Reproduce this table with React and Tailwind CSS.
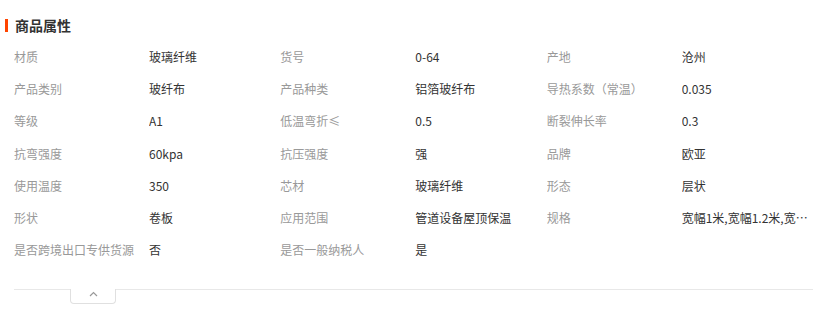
const attrs = [
  ["材质", "玻璃纤维"],
  ["货号", "0-64"],
  ["产地", "沧州"],
  ["产品类别", "玻纤布"],
  ["产品种类", "铝箔玻纤布"],
  ["导热系数（常温）", "0.035"],
  ["等级", "A1"],
  ["低温弯折≤", "0.5"],
  ["断裂伸长率", "0.3"],
  ["抗弯强度", "60kpa"],
  ["抗压强度", "强"],
  ["品牌", "欧亚"],
  ["使用温度", "350"],
  ["芯材", "玻璃纤维"],
  ["形态", "层状"],
  ["形状", "卷板"],
  ["应用范围", "管道设备屋顶保温"],
  ["规格", "宽幅1米,宽幅1.2米,宽幅1.5米"],
  ["是否跨境出口专供货源", "否"],
  ["是否一般纳税人", "是"],
];

const App = () => {
  return (
    <div
      className="w-[824px] h-[314px] bg-white overflow-hidden"
      style={{ fontFamily: '"Noto Sans CJK SC", "Noto Sans", sans-serif' }}
    >
      {/* Title */}
      <div className="flex items-center pl-[5px] pt-[18px] h-[32px]">
        <span className="w-[3px] h-[13px] bg-[#ff4400]" />
        <h2 className="ml-[7px] text-[14px] leading-[14px] font-bold text-[#333]">商品属性</h2>
      </div>

      {/* Attributes */}
      <div className="pl-[14px] pr-[11px] pt-[9px]">
        <div className="grid grid-cols-3">
          {attrs.map(([label, value]) => (
            <div key={label} className="flex items-center h-[32.2px] text-[12px]">
              <span className="w-[135px] shrink-0 text-[#999] truncate">{label}</span>
              <span className="w-[130px] text-[#333] truncate">{value}</span>
            </div>
          ))}
        </div>

        {/* Collapse */}
        <div className="mt-[23px] border-t border-[#e8e8e8]">
          <button className="ml-[56px] -mt-px w-[46px] h-[15px] border border-t-0 border-[#e0e0e0] rounded-b-[4px] bg-white flex justify-center pt-[2px]">
            <svg width="9" height="6" viewBox="0 0 9 6" fill="none">
              <path d="M1 5L4.5 1.5L8 5" stroke="#999" strokeWidth="1.2" />
            </svg>
          </button>
        </div>
      </div>
    </div>
  );
};

export default App;
